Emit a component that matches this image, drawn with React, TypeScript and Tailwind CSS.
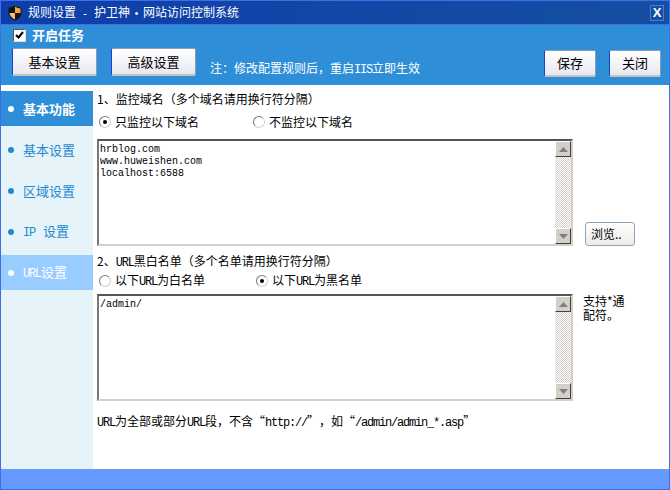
import type { ReactNode } from 'react';

const navItems = [
  { label: '基本功能', state: 'current' },
  { label: '基本设置', state: 'idle' },
  { label: '区域设置', state: 'idle' },
  { label: <><L>IP</L><span className="ml-[8px]">设置</span></>, state: 'idle' },
  { label: <><L>URL</L>设置</>, state: 'hover' },
];

function L({ children }: { children: ReactNode }) {
  return <span className="font-['Liberation_Mono'] text-[12px] tracking-[-1.2px]">{children}</span>;
}

function Shield() {
  return (
    <svg width="14" height="16" viewBox="0 0 14 16">
      <path d="M7 0.5C5 2 3 2.5 0.5 2.5V8C0.5 11.5 3.5 14 7 15.5C10.5 14 13.5 11.5 13.5 8V2.5C11 2.5 9 2 7 0.5Z" fill="#161616" />
      <path d="M7 1.5C8.8 2.8 10.6 3.3 12.5 3.4V8H7Z" fill="#f0a838" />
      <path d="M1.5 8C1.6 11 4 13.2 7 14.4V8Z" fill="#f4c078" />
    </svg>
  );
}

function XpButton({ children, className }: { children: ReactNode; className: string }) {
  return (
    <button
      className={`rounded-[2px] border border-t-[#8c9db5] border-r-[#8c9db5] border-b-[#c4c4bc] border-b-2 border-l-[#1f3fd0] bg-gradient-to-b from-white to-[#e8e8f2] text-[13px] text-black ${className}`}
    >
      {children}
    </button>
  );
}

function Radio({ checked, children, className }: { checked?: boolean; children: ReactNode; className?: string }) {
  return (
    <label className={`flex items-center gap-[4px] ${className ?? ''}`}>
      <span className="flex h-[12px] w-[12px] items-center justify-center rounded-full border border-[#7b7b74] border-r-[#d4d0c8] border-b-[#d4d0c8] bg-white">
        {checked && <span className="h-[4px] w-[4px] rounded-full bg-black" />}
      </span>
      <span>{children}</span>
    </label>
  );
}

function ScrollButton({ up }: { up?: boolean }) {
  return (
    <div className="flex h-[16px] w-[16px] items-center justify-center border border-t-white border-l-white border-r-[#404040] border-b-[#404040] bg-[#d4d0c8]">
      <svg width="9" height="5" viewBox="0 0 9 5">
        <path d={up ? 'M4.5 0L9 5H0Z' : 'M0 0H9L4.5 5Z'} fill="#808080" />
      </svg>
    </div>
  );
}

function ListBox({ lines }: { lines: string[] }) {
  return (
    <div className="flex h-[107px] w-[476px] border-2 border-t-[#555] border-l-[#777] border-r-[#d4d0c8] border-b-[#d4d0c8] bg-white">
      <div className="flex-1 pl-[1px] pt-[3px] font-['Liberation_Mono'] text-[10px] leading-[12px] text-black">
        {lines.map(line => (
          <div key={line}>{line}</div>
        ))}
      </div>
      <div className="flex w-[16px] flex-col justify-between bg-[repeating-conic-gradient(#d4d0c8_0%_25%,#ffffff_0%_50%)] bg-[length:2px_2px]">
        <ScrollButton up />
        <ScrollButton />
      </div>
    </div>
  );
}

export default function App() {
  return (
    <div className="flex h-[490px] w-[670px] flex-col overflow-hidden border border-[#3f6fe8] bg-white font-['Noto_Sans_CJK_SC',sans-serif] text-[12px] text-black [text-spacing-trim:space-all]">
      <div className="flex h-[23px] items-center justify-between bg-gradient-to-r from-[#0f3eaa] to-[#154fa2] pl-[7px] pr-[5px] text-[12px] text-white">
        <div className="flex items-center gap-[6px]">
          <Shield />
          <span className="whitespace-pre">
            规则设置<span className="font-['Liberation_Mono'] text-[10px]">{' - '}</span>
            护卫神<span className="inline-block w-[13px] text-center font-['Liberation_Mono'] text-[10px]">•</span>
            网站访问控制系统
          </span>
        </div>
        <div className="flex h-[16px] w-[14px] items-center justify-center border border-[#4a7ae0] font-['Liberation_Sans'] text-[13px] font-bold">
          X
        </div>
      </div>

      <div className="h-[61px] border-t border-[#3f6fe8] bg-[#2e8fd8] pl-[11px] pr-[8px]">
        <label className="mb-[3px] flex h-[20px] items-center gap-[6px] pl-[1px] text-[13px] font-bold text-white">
          <span className="flex h-[13px] w-[13px] items-center justify-center border border-[#555] border-r-[#ddd] border-b-[#ddd] bg-white">
            <svg width="9" height="8" viewBox="0 0 9 8">
              <path d="M1 4L3.5 6.5L8 1" fill="none" stroke="#000" strokeWidth="2" />
            </svg>
          </span>
          开启任务
        </label>
        <div className="flex items-start">
          <XpButton className="h-[28px] w-[85px]">基本设置</XpButton>
          <XpButton className="ml-[14px] h-[28px] w-[85px]">高级设置</XpButton>
          <span className="ml-[14px] mt-[11px] text-white">
            注：修改配置规则后，重启<L>IIS</L>立即生效
          </span>
          <div className="ml-auto mt-[2px] flex gap-[13px]">
            <XpButton className="h-[27px] w-[52px]">保存</XpButton>
            <XpButton className="h-[27px] w-[52px]">关闭</XpButton>
          </div>
        </div>
      </div>

      <div className="flex flex-1 pt-[6px]">
        <nav className="flex w-[92px] flex-col gap-[6px] bg-[#e6f3f9]">
          {navItems.map((item, index) => (
            <div
              key={index}
              className={`flex h-[35px] items-center gap-[9px] pl-[7px] text-[13px] ${
                item.state === 'current'
                  ? 'bg-[#2e8fd8] font-bold text-white'
                  : item.state === 'hover'
                    ? 'bg-[#99ccff] text-white'
                    : 'text-[#1f8ad0]'
              }`}
            >
              <span
                className={`h-[6px] w-[6px] rounded-full ${item.state === 'idle' ? 'bg-[#1f8ad0]' : 'bg-white'}`}
              />
              <span>{item.label}</span>
            </div>
          ))}
        </nav>

        <main className="flex-1 pl-[4px]">
          <div className="h-[17px] leading-[15px]">1、监控域名（多个域名请用换行符分隔）</div>
          <div className="mb-[3px] flex h-[28px] items-center pl-[2px]">
            <Radio checked className="w-[154px]">只监控以下域名</Radio>
            <Radio>不监控以下域名</Radio>
          </div>
          <ListBox lines={['hrblog.com', 'www.huweishen.com', 'localhost:6588']} />
          <div className="mt-[-24px] flex justify-end pr-[34px]">
            <button className="h-[24px] w-[50px] rounded-[3px] border border-[#8aa4b8] bg-gradient-to-b from-white to-[#ecebe6] pl-[5px] text-left text-[12px]">
              浏览..
            </button>
          </div>
          <div className="mt-[7px] h-[16px] leading-[16px]">
            2、<L>URL</L>黑白名单（多个名单请用换行符分隔）
          </div>
          <div className="mt-[2px] flex h-[20px] items-center pl-[2px]">
            <Radio className="w-[157px]">以下<L>URL</L>为白名单</Radio>
            <Radio checked>以下<L>URL</L>为黑名单</Radio>
          </div>
          <div className="mt-[3px] flex">
            <ListBox lines={['/admin/']} />
            <div className="ml-[10px] leading-[14px]">
              <div>支持*通</div>
              <div>配符。</div>
            </div>
          </div>
          <div className="mt-[11px]">
            <L>URL</L>为全部或部分<L>URL</L>段，不含“<L>http://</L>”，如“<L>/admin/admin_*.asp</L>”
          </div>
        </main>
      </div>

      <div className="h-[20px] shrink-0 bg-[#6699ff]" />
    </div>
  );
}
